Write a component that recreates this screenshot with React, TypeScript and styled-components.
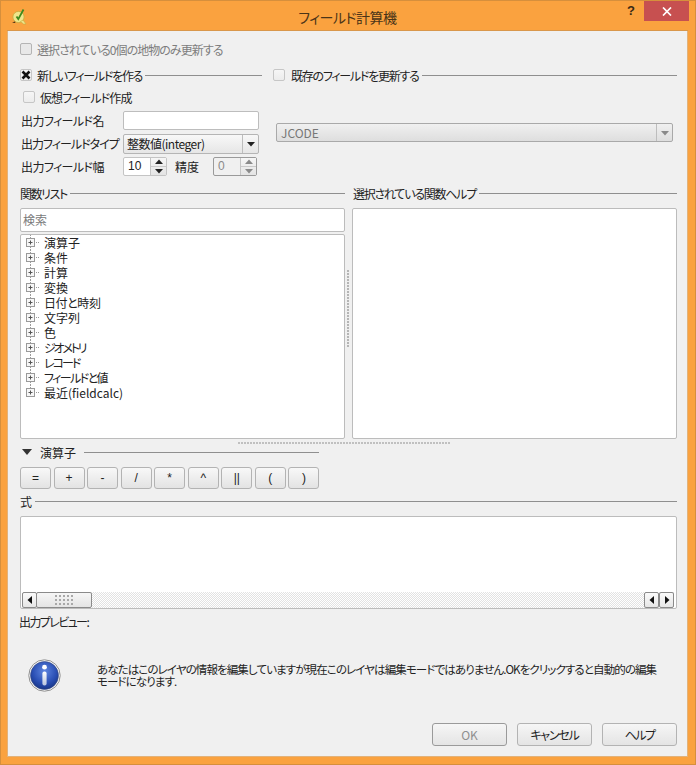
import styled, { createGlobalStyle } from 'styled-components';

const GlobalStyle = createGlobalStyle`
  html, body {
    margin: 0;
    padding: 0;
    background: #faa23f;
  }
  body {
    font-family: "Noto Sans CJK JP", "Liberation Sans", sans-serif;
    font-size: 12px;
    font-feature-settings: "palt";
    color: #222;
  }
  * {
    box-sizing: border-box;
  }
`;

// kana are much narrower in the original UI font, so each label gets its own tracking
const Tight = styled.span<{ $ls: number }>`
  letter-spacing: ${(p) => p.$ls}px;
  white-space: nowrap;
`;

const Frame = styled.div`
  width: 696px;
  height: 765px;
  display: flex;
  flex-direction: column;
  border: 1px solid #d68f3c;
  background: #faa23f;
`;

const TitleBar = styled.div`
  height: 30px;
  flex: none;
  display: grid;
  grid-template-columns: 1fr auto 1fr;
  align-items: start;
  border-bottom: 1px solid #d9974b;
  margin: 0 7px 0 6px;
`;

const Logo = styled.svg`
  width: 18px;
  height: 18px;
  margin: 6px 0 0 4px;
`;

const Title = styled.div`
  font-size: 14px;
  line-height: 20px;
  margin-top: 6px;
  color: #4a3418;
  letter-spacing: -0.5px;
`;

const TitleActions = styled.div`
  display: flex;
  justify-content: flex-end;
  margin-right: -1px;
`;

const HelpMark = styled.div`
  width: 14px;
  margin-right: 6px;
  padding-top: 1px;
  font: bold 13px/18px "Liberation Sans", sans-serif;
  color: #3a2a15;
  text-align: center;
`;

const CloseButton = styled.div`
  width: 45px;
  height: 20px;
  background: #c75050;
  display: flex;
  align-items: center;
  justify-content: center;
`;

const Client = styled.div`
  flex: 1;
  margin: 0 7px 7px 6px;
  padding: 10px 10px 10px 12px;
  background: #f0f0f0;
  border: 1px solid #e2b27a;
  border-width: 0 1px 1px 1px;
  display: flex;
  flex-direction: column;
`;

const CheckRow = styled.label<{ $indent?: number; $top?: number; $gap?: number; $disabled?: boolean }>`
  display: flex;
  align-items: center;
  gap: ${(p) => p.$gap ?? 5}px;
  height: 16px;
  margin-left: ${(p) => p.$indent ?? 0}px;
  margin-top: ${(p) => p.$top ?? 0}px;
  white-space: nowrap;
  color: ${(p) => (p.$disabled ? '#7d7d7d' : '#222')};
`;

const Box = styled.span<{ $disabled?: boolean }>`
  width: 12px;
  height: 12px;
  flex: none;
  border: 1px solid ${(p) => (p.$disabled ? '#b4b4b4' : '#c6c6c6')};
  border-radius: 2px;
  background: ${(p) => (p.$disabled ? '#e8e8e8' : 'linear-gradient(#f6f6f6, #ececec)')};
  display: flex;
  align-items: center;
  justify-content: center;
`;

const TopGrid = styled.div`
  display: grid;
  grid-template-columns: 242px 1fr;
  column-gap: 11px;
  margin-top: 10px;
  height: 117px;
`;

const GroupHeader = styled.div<{ $top?: number }>`
  display: flex;
  align-items: center;
  gap: 3px;
  height: 16px;
  margin-top: ${(p) => p.$top ?? 0}px;
  white-space: nowrap;

  &::after {
    content: '';
    flex: 1;
    height: 1px;
    background: #8f8f8f;
  }
`;

const Column = styled.div`
  display: flex;
  flex-direction: column;
`;

const FieldGrid = styled.div`
  display: grid;
  grid-template-columns: 102px 136px;
  grid-auto-rows: 19px;
  row-gap: 4px;
  align-items: center;
  margin: 6px 0 0 1px;
`;

const TextInput = styled.div`
  height: 19px;
  background: #fff;
  border: 1px solid #bdbdbd;
  border-radius: 2px;
`;

const Combo = styled.div<{ $disabled?: boolean }>`
  height: ${(p) => (p.$disabled ? 19 : 20)}px;
  display: flex;
  align-items: center;
  justify-content: space-between;
  padding-left: ${(p) => (p.$disabled ? 4 : 3)}px;
  border: 1px solid ${(p) => (p.$disabled ? '#a9a9a9' : '#b5b5b5')};
  border-radius: 2px;
  background: ${(p) =>
    p.$disabled ? 'linear-gradient(#f0f0f0, #dedede)' : 'linear-gradient(#f8f8f8, #e6e6e6)'};
  color: ${(p) => (p.$disabled ? '#777' : '#222')};
`;

const ComboArrow = styled.span`
  width: 16px;
  height: 100%;
  border-left: 1px solid #bdbdbd;
  display: flex;
  align-items: center;
  justify-content: center;
  flex: none;
`;

const WidthRow = styled.div`
  display: flex;
  align-items: center;
`;

const Precision = styled.span`
  margin: 0 14px 0 8px;
`;

const Spin = styled.div<{ $disabled?: boolean }>`
  width: 44px;
  height: 19px;
  display: flex;
  border: 1px solid ${(p) => (p.$disabled ? '#9a9a9a' : '#c4c4c4')};
  border-radius: 2px;
  background: ${(p) => (p.$disabled ? '#f0f0f0' : '#fff')};
  color: ${(p) => (p.$disabled ? '#8a8a8a' : '#222')};
`;

const SpinValue = styled.span`
  flex: 1;
  padding-left: 4px;
  font: 12px/17px "Liberation Sans", sans-serif;
`;

const SpinButtons = styled.span`
  width: 16px;
  display: flex;
  flex-direction: column;
  border-left: 1px solid #c4c4c4;
  background: linear-gradient(#f6f6f6, #e4e4e4);
`;

const SpinButton = styled.span`
  flex: 1;
  display: flex;
  align-items: center;
  justify-content: center;
  & + & {
    border-top: 1px solid #c9c9c9;
  }
`;

const JcodeCombo = styled.div`
  margin: 40px 4px 0 3px;
`;

const FunctionHeaders = styled.div`
  display: grid;
  grid-template-columns: 325px 1fr;
  column-gap: 8px;
  margin-top: 1px;
`;

const Panels = styled.div`
  display: grid;
  grid-template-columns: 325px 7px 1fr;
  height: 231px;
  margin-top: 7px;
`;

const PanelColumn = styled.div`
  display: flex;
  flex-direction: column;
  gap: 2px;
`;

const Sunken = styled.div`
  background: #fff;
  border: 1px solid #bcbcbc;
  border-radius: 2px;
`;

const Search = styled(Sunken)`
  height: 24px;
  flex: none;
  padding-left: 2px;
  line-height: 22px;
  color: #7a7a7a;
`;

const Tree = styled(Sunken)`
  flex: 1;
  padding: 0 0 0 4px;
`;

const TreeRow = styled.div`
  display: flex;
  align-items: center;
  height: 15px;
  line-height: 15px;
  white-space: nowrap;
`;

const TreeGlyph = styled.svg`
  width: 19px;
  height: 15px;
  flex: none;
`;

const Gutter = styled.div`
  display: flex;
  justify-content: center;
  padding-top: 62px;
`;

const VerticalGrip = styled.div`
  width: 3px;
  height: 77px;
  background-image: radial-gradient(circle at 1px 1px, #b5b5b5 1px, transparent 1.2px);
  background-size: 3px 3px;
`;

const HorizontalGrip = styled.div`
  width: 212px;
  height: 3px;
  margin: 3px 0 0 218px;
  background-image: radial-gradient(circle at 1px 1px, #c0c0c0 1px, transparent 1.2px);
  background-size: 3px 3px;
`;

const OperatorHeader = styled.div`
  display: flex;
  align-items: center;
  height: 14px;
  width: 299px;
  white-space: nowrap;

  &::after {
    content: '';
    flex: 1;
    height: 1px;
    margin-left: 8px;
    background: #8f8f8f;
  }
`;

const Triangle = styled.span`
  width: 0;
  height: 0;
  margin: 0 8px 0 2px;
  border-style: solid;
  border-width: 6px 5.5px 0;
  border-color: #333 transparent transparent;
`;

const OperatorBar = styled.div`
  display: grid;
  grid-template-columns: repeat(9, 31px);
  column-gap: 2.55px;
  margin-top: 8px;
`;

const OperatorButton = styled.div`
  height: 22px;
  border: 1px solid #b3b3b3;
  border-radius: 3px;
  background: linear-gradient(#f8f8f8, #e3e3e3);
  display: flex;
  align-items: center;
  justify-content: center;
  font: 12px/1 "Liberation Sans", sans-serif;
`;

const Expression = styled(Sunken)`
  height: 93px;
  margin-top: 7px;
  display: flex;
  flex-direction: column;
  justify-content: flex-end;
  padding: 0 2px 0 1px;
`;

const ScrollBar = styled.div`
  height: 16px;
  display: flex;
  background-color: #fff;
  background-image: repeating-conic-gradient(#e2e2e2 0 25%, #fff 0 50%);
  background-size: 2px 2px;
`;

const ScrollArrow = styled.span`
  width: 15px;
  flex: none;
  border: 1px solid #8a8a8a;
  border-radius: 2px;
  background: linear-gradient(#fafafa, #e6e6e6);
  display: flex;
  align-items: center;
  justify-content: center;
`;

const ScrollThumb = styled.span`
  width: 56px;
  flex: none;
  margin-left: -1px;
  border: 1px solid #8a8a8a;
  border-radius: 2px;
  background: linear-gradient(#f6f6f6, #e4e4e4);
  display: flex;
  align-items: center;
  justify-content: center;
`;

const ThumbGrip = styled.span`
  width: 18px;
  height: 11px;
  background-image: radial-gradient(circle at 1px 1px, #a8a8a8 0.9px, transparent 1.1px);
  background-size: 4px 4px;
`;

const ScrollTrack = styled.span`
  flex: 1;
`;

const PreviewLabel = styled.div`
  height: 16px;
  margin: 5px 0 0 -1px;
  line-height: 16px;
`;

const Notice = styled.div`
  display: flex;
  align-items: center;
  height: 34px;
  margin: 28px 0 0 8px;
`;

const InfoIcon = styled.svg`
  width: 33px;
  height: 33px;
  flex: none;
`;

const NoticeText = styled.p`
  margin: 0 0 0 36px;
  line-height: 12px;
  font-size: 11.5px;
  letter-spacing: -0.9px;
  white-space: nowrap;
`;

const DialogButtons = styled.div`
  display: flex;
  justify-content: flex-end;
  gap: 10px;
  margin-top: auto;
`;

const DialogButton = styled.div<{ $disabled?: boolean }>`
  width: 75px;
  height: 23px;
  border: 1px solid ${(p) => (p.$disabled ? '#9a9a9a' : '#b3b3b3')};
  border-radius: 3px;
  background: linear-gradient(#f6f6f6, #e4e4e4);
  color: ${(p) => (p.$disabled ? '#8f8f8f' : '#222')};
  display: flex;
  align-items: center;
  justify-content: center;
`;

const Cross = () => (
  <svg width="10" height="10" viewBox="0 0 10 10">
    <path d="M1.5 1.5L8.5 8.5M8.5 1.5L1.5 8.5" stroke="#111" strokeWidth="2.6" />
  </svg>
);

const Arrow = ({ dir, color = '#222', size = 8 }: { dir: 'up' | 'down' | 'left' | 'right'; color?: string; size?: number }) => {
  const points = {
    up: '4,1.5 8,6 0,6',
    down: '0,2 8,2 4,6.5',
    left: '6,0 6,8 1.5,4',
    right: '2,0 2,8 6.5,4',
  }[dir];
  return (
    <svg width={size} height={size} viewBox="0 0 8 8">
      <polygon points={points} fill={color} />
    </svg>
  );
};

type CheckProps = {
  label: string;
  ls: number;
  checked?: boolean;
  disabled?: boolean;
  indent?: number;
  top?: number;
  gap?: number;
};

const Check = ({ label, ls, checked, disabled, indent, top, gap }: CheckProps) => (
  <CheckRow $indent={indent} $top={top} $gap={gap} $disabled={disabled}>
    <Box $disabled={disabled}>{checked && <Cross />}</Box>
    <Tight $ls={ls}>{label}</Tight>
  </CheckRow>
);

const SpinBox = ({ value, disabled }: { value: string; disabled?: boolean }) => {
  const color = disabled ? '#8a8a8a' : '#222';
  return (
    <Spin $disabled={disabled}>
      <SpinValue>{value}</SpinValue>
      <SpinButtons>
        <SpinButton>
          <Arrow dir="up" color={color} />
        </SpinButton>
        <SpinButton>
          <Arrow dir="down" color={color} />
        </SpinButton>
      </SpinButtons>
    </Spin>
  );
};

const TreeItem = ({ label, ls, last }: { label: string; ls: number; last?: boolean }) => (
  <TreeRow>
    <TreeGlyph viewBox="0 0 19 15">
      <path
        d={last ? 'M5.5 0V3M11 7.5H15' : 'M5.5 0V3M5.5 12V15M11 7.5H15'}
        stroke="#9a9a9a"
        strokeDasharray="1 1"
        fill="none"
      />
      <rect x="1.5" y="3.5" width="8" height="8" fill="#f7f7f7" stroke="#9a9a9a" />
      <path d="M3.5 7.5H7.5M5.5 5.5V9.5" stroke="#555" fill="none" />
    </TreeGlyph>
    <Tight $ls={ls}>{label}</Tight>
  </TreeRow>
);

const treeItems = [
  { label: '演算子', ls: 0 },
  { label: '条件', ls: 0 },
  { label: '計算', ls: 0 },
  { label: '変換', ls: 0 },
  { label: '日付と時刻', ls: -0.4 },
  { label: '文字列', ls: 0 },
  { label: '色', ls: 0 },
  { label: 'ジオメトリ', ls: -2.2 },
  { label: 'レコード', ls: -2 },
  { label: 'フィールドと値', ls: -1.6 },
  { label: '最近(fieldcalc)', ls: 0 },
];

const operators = ['=', '+', '-', '/', '*', '^', '||', '(', ')'];

const App = () => {
  return (
    <>
      <GlobalStyle />
      <Frame>
        <TitleBar>
          <Logo viewBox="0 0 18 18">
            <circle cx="7.5" cy="10" r="5.6" fill="#efe58c" stroke="#c2ad3e" strokeWidth=".8" />
            <path d="M9.5 14.5l3 2.5h2.5l-3-4z" fill="#efe58c" stroke="#c2ad3e" strokeWidth=".6" />
            <path d="M5.5 9.5l1.8 2.6L12.5 2.5" fill="none" stroke="#3f8a1e" strokeWidth="1.8" />
            <path d="M1 15.5l3-.9.4 1.5z" fill="#3d2a10" />
          </Logo>
          <Title>フィールド計算機</Title>
          <TitleActions>
            <HelpMark>?</HelpMark>
            <CloseButton>
              <svg width="10" height="9" viewBox="0 0 10 9">
                <path d="M1 .5L9 8.5M9 .5L1 8.5" stroke="#fff" strokeWidth="1.7" />
              </svg>
            </CloseButton>
          </TitleActions>
        </TitleBar>
        <Client>
          <Check label="選択されている0個の地物のみ更新する" ls={-0.95} disabled />
          <TopGrid>
            <Column>
              <GroupHeader>
                <Check label="新しいフィールドを作る" ls={-1.25} checked />
              </GroupHeader>
              <Check label="仮想フィールド作成" ls={-0.9} indent={3} top={6} />
              <FieldGrid>
                <Tight $ls={-0.6}>出力フィールド名</Tight>
                <TextInput />
                <Tight $ls={-1}>出力フィールドタイプ</Tight>
                <Combo>
                  <Tight $ls={-0.5}>整数値(integer)</Tight>
                  <ComboArrow>
                    <Arrow dir="down" />
                  </ComboArrow>
                </Combo>
                <Tight $ls={-0.6}>出力フィールド幅</Tight>
                <WidthRow>
                  <SpinBox value="10" />
                  <Precision>精度</Precision>
                  <SpinBox value="0" disabled />
                </WidthRow>
              </FieldGrid>
            </Column>
            <Column>
              <GroupHeader>
                <Check label="既存のフィールドを更新する" ls={-1.25} gap={6} />
              </GroupHeader>
              <JcodeCombo>
                <Combo $disabled>
                  <span>JCODE</span>
                  <ComboArrow>
                    <Arrow dir="down" color="#8a8a8a" />
                  </ComboArrow>
                </Combo>
              </JcodeCombo>
            </Column>
          </TopGrid>
          <FunctionHeaders>
            <GroupHeader>
              <Tight $ls={-1.4}>関数リスト</Tight>
            </GroupHeader>
            <GroupHeader>
              <Tight $ls={-1.25}>選択されている関数ヘルプ</Tight>
            </GroupHeader>
          </FunctionHeaders>
          <Panels>
            <PanelColumn>
              <Search>検索</Search>
              <Tree>
                {treeItems.map((item, i) => (
                  <TreeItem key={item.label} label={item.label} ls={item.ls} last={i === treeItems.length - 1} />
                ))}
              </Tree>
            </PanelColumn>
            <Gutter>
              <VerticalGrip />
            </Gutter>
            <Sunken />
          </Panels>
          <HorizontalGrip />
          <OperatorHeader>
            <Triangle />
            演算子
          </OperatorHeader>
          <OperatorBar>
            {operators.map((op) => (
              <OperatorButton key={op}>{op}</OperatorButton>
            ))}
          </OperatorBar>
          <GroupHeader $top={4}>式</GroupHeader>
          <Expression>
            <ScrollBar>
              <ScrollArrow>
                <Arrow dir="left" color="#111" />
              </ScrollArrow>
              <ScrollThumb>
                <ThumbGrip />
              </ScrollThumb>
              <ScrollTrack />
              <ScrollArrow>
                <Arrow dir="left" color="#111" />
              </ScrollArrow>
              <ScrollArrow>
                <Arrow dir="right" color="#111" />
              </ScrollArrow>
            </ScrollBar>
          </Expression>
          <PreviewLabel>
            <Tight $ls={-1.6}>出力プレビュー:</Tight>
          </PreviewLabel>
          <Notice>
            <InfoIcon viewBox="0 0 33 33">
              <defs>
                <radialGradient id="infoFill" cx="50%" cy="35%" r="70%">
                  <stop offset="0%" stopColor="#5f86e0" />
                  <stop offset="60%" stopColor="#2a4fb4" />
                  <stop offset="100%" stopColor="#14307e" />
                </radialGradient>
                <linearGradient id="infoBar" x1="0" y1="0" x2="0" y2="1">
                  <stop offset="0%" stopColor="#fff" />
                  <stop offset="100%" stopColor="#b8c4de" />
                </linearGradient>
              </defs>
              <circle cx="16.5" cy="16.5" r="15.7" fill="#fff" stroke="#8c8c8c" strokeWidth="1" />
              <circle cx="16.5" cy="16.5" r="14" fill="url(#infoFill)" stroke="#3b4c7a" strokeWidth=".6" />
              <circle cx="16.5" cy="8.2" r="2.4" fill="#fff" />
              <rect x="14.4" y="12.5" width="4.2" height="14" rx="2" fill="url(#infoBar)" />
            </InfoIcon>
            <NoticeText>
              あなたはこのレイヤの情報を編集していますが現在このレイヤは編集モードではありません.OKをクリックすると自動的の編集
              <br />
              モードになります.
            </NoticeText>
          </Notice>
          <DialogButtons>
            <DialogButton $disabled>OK</DialogButton>
            <DialogButton>
              <Tight $ls={-1.2}>キャンセル</Tight>
            </DialogButton>
            <DialogButton>
              <Tight $ls={-1.6}>ヘルプ</Tight>
            </DialogButton>
          </DialogButtons>
        </Client>
      </Frame>
    </>
  );
};

export default App;
